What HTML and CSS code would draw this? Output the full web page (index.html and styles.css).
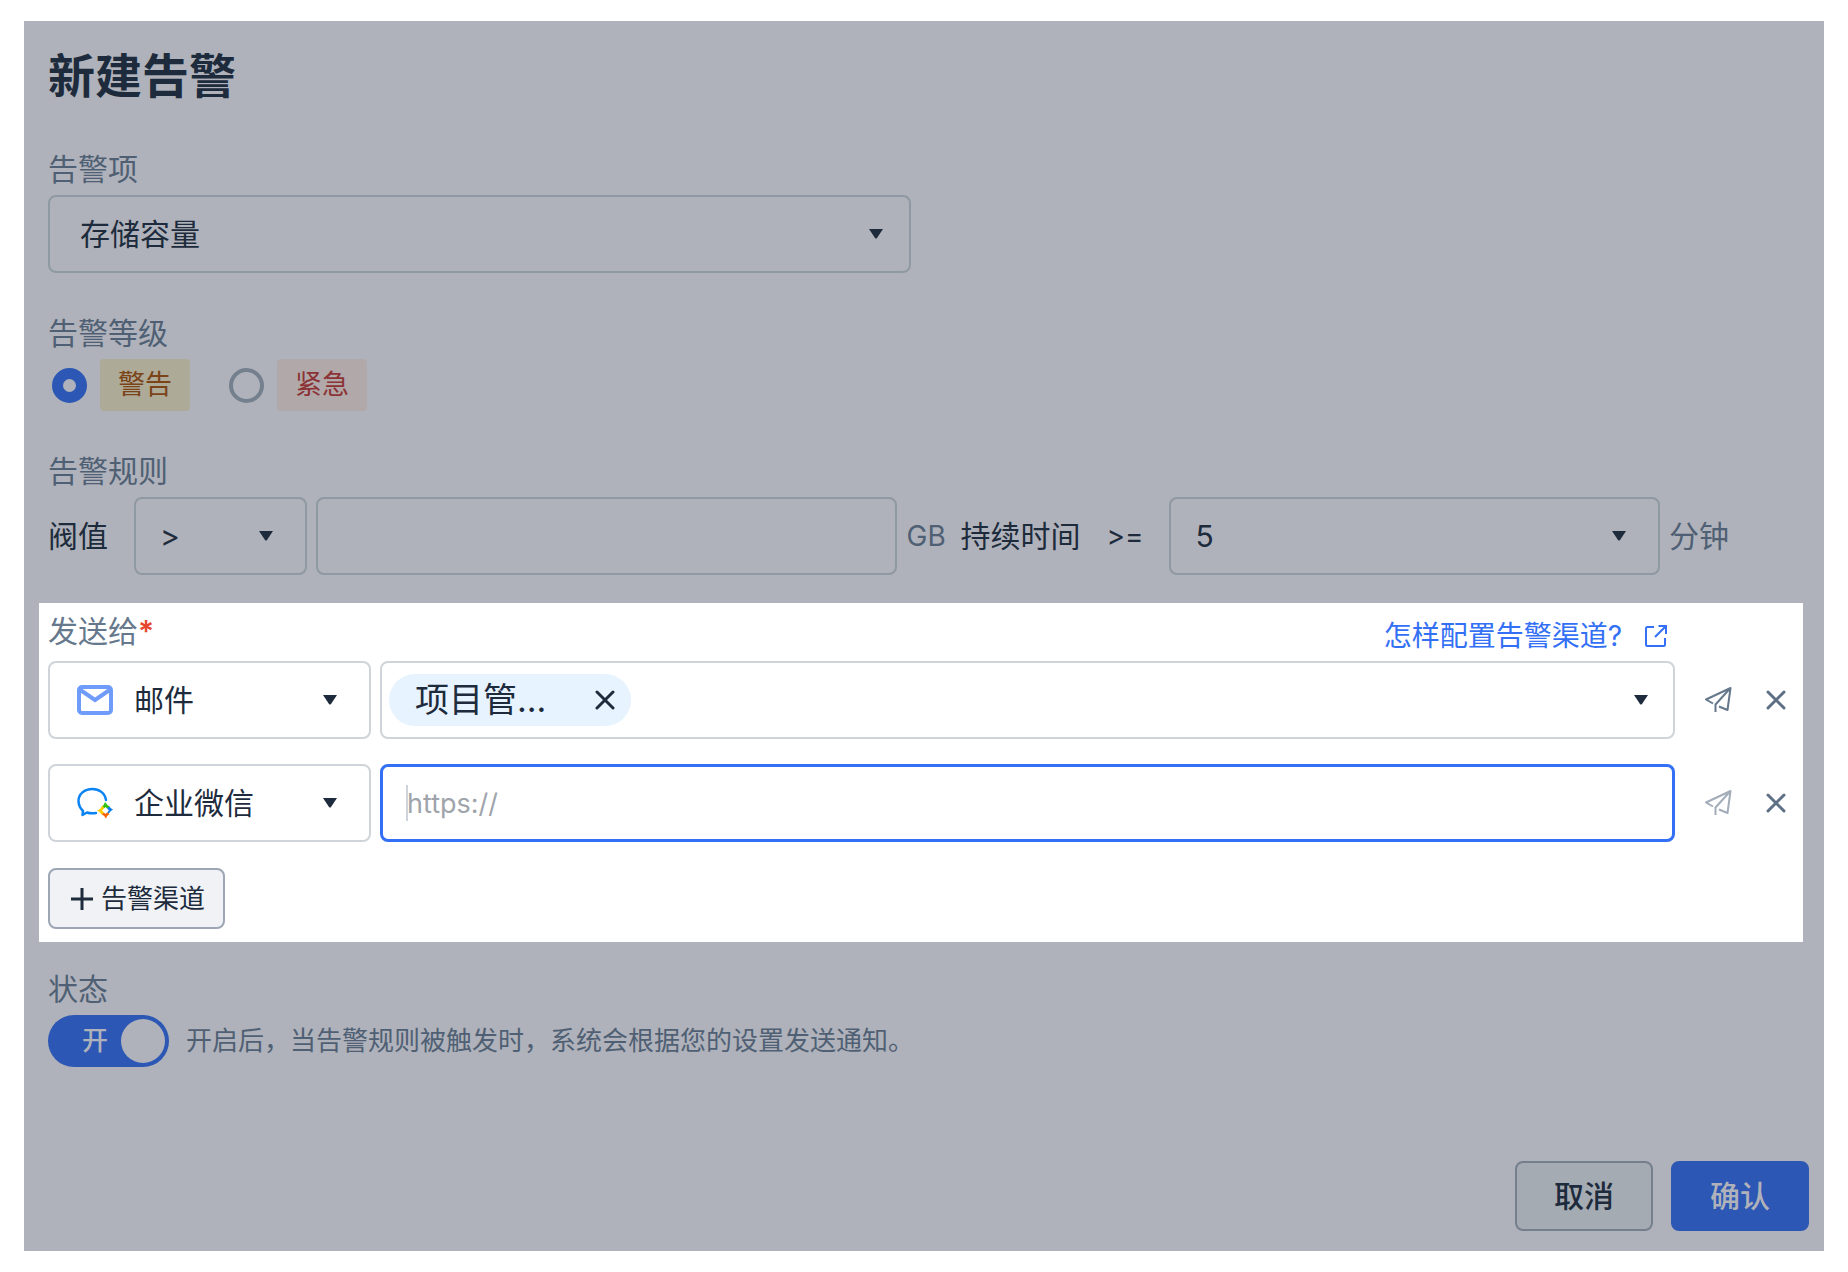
FILE: index.html
```html
<!DOCTYPE html>
<html lang="zh-CN">
<head>
<meta charset="utf-8">
<meta name="viewport" content="width=device-width, initial-scale=1">
<title>新建告警</title>
<link rel="stylesheet" href="styles.css">
</head>
<body>
<svg class="sprite" aria-hidden="true">
  <symbol id="caret" viewBox="0 0 14 10"><path d="M0 0h14L8 9Q7 10 6 9z" fill="currentColor"/></symbol>
  <symbol id="cross" viewBox="0 0 20 20"><path d="M2 2l16 16M18 2L2 18" fill="none" stroke="currentColor" stroke-width="3" stroke-linecap="round"/></symbol>
  <symbol id="plane" viewBox="0 0 28 28"><path d="M9 17.500L2 13.500L26.500 2L23.500 24L15 20.500M26 2.500L11.500 18.500V26" fill="none" stroke="currentColor" stroke-width="2" stroke-linejoin="round"/></symbol>
</svg>

<form class="dialog">
  <h1 class="title">新建告警</h1>

  <div class="field">
    <label class="label" for="item">告警项</label>
    <div class="select select-item">
      <select class="box" id="item"><option>存储容量</option></select>
      <svg class="caret"><use href="#caret"/></svg>
    </div>
  </div>

  <fieldset class="field">
    <legend class="label">告警等级</legend>
    <div class="levels">
      <label class="level"><input class="radio" type="radio" name="level" checked><span class="tag tag-warn">警告</span></label>
      <label class="level"><input class="radio" type="radio" name="level"><span class="tag tag-urgent">紧急</span></label>
    </div>
  </fieldset>

  <fieldset class="field">
    <legend class="label">告警规则</legend>
    <div class="rule">
      <label class="rule-name" for="threshold">阀值</label>
      <div class="select select-op">
        <select class="box" aria-label="比较"><option>&gt;</option></select>
        <svg class="caret"><use href="#caret"/></svg>
      </div>
      <input class="box rule-value" id="threshold" type="text">
      <span class="unit unit-gb">GB</span>
      <label class="rule-duration" for="duration">持续时间</label>
      <span class="rule-op">&gt;=</span>
      <div class="select select-duration">
        <select class="box" id="duration"><option>5</option></select>
        <svg class="caret"><use href="#caret"/></svg>
      </div>
      <span class="unit">分钟</span>
    </div>
  </fieldset>

  <section class="spotlight">
    <div class="send-head">
      <span class="label">发送给<span class="required">*</span></span>
      <a class="help" href="#help">怎样配置告警渠道?
        <svg class="help-icon" viewBox="0 0 24 24"><path d="M10 3H3.500Q2 3 2 4.500V20.500Q2 22 3.500 22H19.500Q21 22 21 20.500V14M14.500 2H22V10M22 2L11 13" fill="none" stroke="currentColor" stroke-width="2"/></svg>
      </a>
    </div>

    <div class="channels">
      <div class="channel">
        <div class="select select-channel">
          <select class="box" aria-label="渠道"><option>邮件</option></select>
          <svg class="channel-icon" viewBox="0 0 38 32"><rect x="3" y="3" width="32" height="26" rx="3" fill="none" stroke="#6f9bfb" stroke-width="4"/><path d="M3 5L19 16L35 5" fill="none" stroke="#6f9bfb" stroke-width="4"/></svg>
          <svg class="caret"><use href="#caret"/></svg>
        </div>
        <div class="box recipients">
          <span class="chip"><span class="chip-text">项目管...</span><button class="icon-button" type="button" aria-label="移除"><svg class="cross"><use href="#cross"/></svg></button></span>
          <button class="icon-button" type="button" aria-label="展开"><svg class="recipients-caret"><use href="#caret"/></svg></button>
        </div>
        <button class="icon-button send" type="button" aria-label="发送测试"><svg class="plane"><use href="#plane"/></svg></button>
        <button class="icon-button delete" type="button" aria-label="删除"><svg class="cross"><use href="#cross"/></svg></button>
      </div>

      <div class="channel">
        <div class="select select-channel">
          <select class="box" aria-label="渠道"><option>企业微信</option></select>
          <svg class="channel-icon" viewBox="0 0 38 32"><path d="M30 13C29 6 23 2 16.500 2C8.500 2 2.500 7 2.500 14C2.500 18 4 21 7 24L6.500 28L11 25.500C14 26.500 17 26.500 20 26" fill="none" stroke="#0a84f5" stroke-width="2.500" stroke-linejoin="round" stroke-linecap="round"/><path d="M29 15Q31 18 34 20L30.500 22Q27 21 25.500 19.500Q28.500 18 29 15z" fill="#2fc010"/><path d="M37 22.500Q34 24 32.500 27L30 23.500Q31.500 20 33.500 19.500Q34.500 21.500 37 22.500z" fill="#0a7cf0"/><path d="M30 31.500Q28.500 28.500 25.500 27L29 24.500Q32 25.500 33.500 27Q30.500 28.500 30 31.500z" fill="#fb6500"/><path d="M21 23.500Q25 22 26.500 18.500L29 22.500Q28 26 25.500 27.500Q24 24.500 21 23.500z" fill="#ffcc00"/><path d="M29.500 20L33 23.500L29.500 27L26 23.500z" fill="#fff"/></svg>
          <svg class="caret"><use href="#caret"/></svg>
        </div>
        <div class="webhook">
          <input class="box webhook-input" type="text" placeholder="https://" aria-label="Webhook">
          <span class="text-cursor"></span>
        </div>
        <button class="icon-button send is-disabled" type="button" aria-label="发送测试"><svg class="plane"><use href="#plane"/></svg></button>
        <button class="icon-button delete" type="button" aria-label="删除"><svg class="cross"><use href="#cross"/></svg></button>
      </div>
    </div>

    <button class="add" type="button"><svg class="plus" viewBox="0 0 22 22"><path d="M11 0v22M0 11h22" stroke="currentColor" stroke-width="3"/></svg>告警渠道</button>
  </section>

  <div class="field field-status">
    <span class="label" id="status">状态</span>
    <div class="status">
      <label class="switch"><input class="switch-input" type="checkbox" role="switch" checked aria-labelledby="status"><span class="switch-text">开</span></label>
      <span class="status-note">开启后，当告警规则被触发时，系统会根据您的设置发送通知。</span>
    </div>
  </div>

  <div class="footer">
    <button class="action action-cancel" type="button">取消</button>
    <button class="action action-ok" type="submit">确认</button>
  </div>
</form>
</body>
</html>
```
FILE: styles.css
```css
*,
*::before {
  box-sizing: border-box;
}

body {
  margin: 0;
  background: #fff;
  font-family: Inter, "Noto Sans CJK SC", sans-serif;
  font-size: 30px;
  line-height: 42px;
}

button,
input,
select {
  margin: 0;
  font: inherit;
  color: inherit;
}

.sprite {
  display: none;
}

svg {
  display: block;
}

.dialog {
  --surface: #afb2ba;
  --text: #1d2b3c;
  --muted: #4f6074;
  --line: #8f99a3;
  --blue: #2d57b4;
  margin: 21px 24px;
  padding: 20px 15px 20px 24px;
  background: var(--surface);
  color: var(--text);
}

.title {
  margin: 0 0 -2px;
  font-size: 47px;
  line-height: 70px;
  font-weight: 700;
}

.field {
  margin: 39px 0 0;
  padding: 0;
  border: 0;
  min-width: 0;
}

.title + .field {
  margin-top: 39px;
}

.label {
  display: block;
  padding: 0;
  margin-bottom: 5px;
  color: var(--muted);
}

.box {
  width: 100%;
  height: 78px;
  padding: 0 24px;
  border: 2px solid var(--line);
  border-radius: 8px;
  background: transparent;
  appearance: none;
  outline: none;
}

/* The select and its icons share one grid cell */
.select,
.webhook {
  display: grid;
  align-items: center;
}

.select > *,
.webhook > * {
  grid-area: 1 / 1;
}

.caret {
  width: 14px;
  height: 10px;
  margin-right: 34px;
  justify-self: end;
  pointer-events: none;
}

.select-item {
  width: 49%;
}

.select-item .box {
  padding-left: 30px;
}

.select-item .caret {
  margin-right: 28px;
}

.levels {
  display: flex;
  gap: 39px;
  padding-left: 4px;
}

.level {
  display: flex;
  align-items: center;
  gap: 13px;
}

.radio {
  width: 35px;
  height: 35px;
  border: 4px solid #74808e;
  border-radius: 50%;
  appearance: none;
}

.radio:checked {
  border: 11px solid var(--blue);
}

.tag {
  padding: 0 18px;
  border-radius: 4px;
  font-size: 27px;
  line-height: 52px;
}

.tag-warn {
  background: #aeaa98;
  color: #7a4318;
}

.tag-urgent {
  background: #b0a8a9;
  color: #8c3336;
}

.rule {
  display: flex;
  align-items: center;
  gap: 9px;
  margin-right: 80px;
  white-space: nowrap;
}

.rule-name {
  margin-right: 17px;
}

.select-op {
  width: 173px;
}

.rule-value {
  flex: 530 1 0;
  min-width: 0;
}

.unit {
  color: var(--muted);
}

.unit-gb {
  width: 39px;
  font-size: 28px;
}

.rule-duration {
  margin: 0 17px 0 6px;
}

.rule-op {
  width: 54px;
  font-size: 28px;
}

.select-duration {
  flex: 491 1 0;
}

.spotlight {
  --text: #1d2b3c;
  --muted: #66788c;
  --line: #cfd4da;
  --blue: #3370f5;
  margin: 28px 6px 0 -9px;
  padding: 7px 6px 13px 9px;
  background: #fff;
}

.send-head {
  display: flex;
  align-items: flex-end;
  justify-content: space-between;
  margin-right: 129px;
  margin-bottom: 4px;
}

.required {
  color: #e8472f;
  font-weight: 600;
}

.help {
  display: flex;
  align-items: center;
  gap: 22px;
  color: var(--blue);
  font-size: 28px;
  text-decoration: none;
}

.help-icon {
  width: 24px;
  height: 24px;
}

.channels {
  display: grid;
  gap: 25px;
}

.channel {
  display: flex;
  align-items: center;
  gap: 9px;
}

.select-channel {
  width: 323px;
  flex: none;
}

.select-channel .box {
  padding-left: 84px;
}

.channel-icon {
  width: 38px;
  height: 32px;
  margin-left: 28px;
  pointer-events: none;
}

.recipients {
  display: flex;
  flex: 1;
  align-items: center;
  justify-content: space-between;
  padding: 0 25px 0 7px;
}

.chip {
  display: flex;
  align-items: center;
  gap: 49px;
  height: 52px;
  padding: 0 16px 0 26px;
  border-radius: 26px;
  background: #e7f3ff;
}

.chip-text {
  font-size: 34px;
}

.icon-button {
  padding: 0;
  border: 0;
  background: none;
}

.cross {
  width: 20px;
  height: 20px;
}

.recipients-caret {
  width: 14px;
  height: 10px;
}

.webhook {
  flex: 1;
}

.webhook-input {
  padding: 0 24px;
  border: 3px solid var(--blue);
  font-size: 27px;
}

.webhook-input::placeholder {
  color: #9fa4ab;
  opacity: 1;
}

.text-cursor {
  width: 2px;
  height: 36px;
  margin-left: 26px;
  background: #cfd4da;
}

.send {
  margin-left: 20px;
  color: var(--muted);
}

.send.is-disabled {
  color: #a3adb9;
}

.plane {
  width: 28px;
  height: 28px;
}

.delete {
  margin: 0 11px 0 25px;
  color: #5f7086;
}

.add {
  display: flex;
  align-items: center;
  gap: 8px;
  height: 61px;
  margin-top: 26px;
  padding: 0 18px 0 21px;
  border: 2px solid #9ca6b4;
  border-radius: 8px;
  background: #f0f2f5;
  font-size: 26px;
}

.plus {
  width: 22px;
  height: 22px;
}

.field-status {
  margin-top: 26px;
}

.status {
  display: flex;
  align-items: center;
  gap: 17px;
}

.switch {
  display: grid;
  align-items: center;
}

.switch > * {
  grid-area: 1 / 1;
}

.switch-input {
  display: flex;
  justify-content: flex-end;
  width: 121px;
  height: 52px;
  padding: 4px;
  border-radius: 26px;
  background: var(--blue);
  appearance: none;
}

.switch-input::before {
  content: "";
  width: 44px;
  height: 44px;
  border-radius: 50%;
  background: var(--surface);
}

.switch-text {
  margin-left: 34px;
  color: var(--surface);
  font-size: 26px;
  font-weight: 500;
}

.status-note {
  color: var(--muted);
  font-size: 26px;
}

.footer {
  display: flex;
  justify-content: flex-end;
  gap: 18px;
  margin-top: 94px;
}

.action {
  width: 138px;
  height: 70px;
  border: 2px solid #74808e;
  border-radius: 8px;
  font-weight: 500;
}

.action-cancel {
  background: #a5abb3;
}

.action-ok {
  border-color: var(--blue);
  background: var(--blue);
  color: var(--surface);
}
```
